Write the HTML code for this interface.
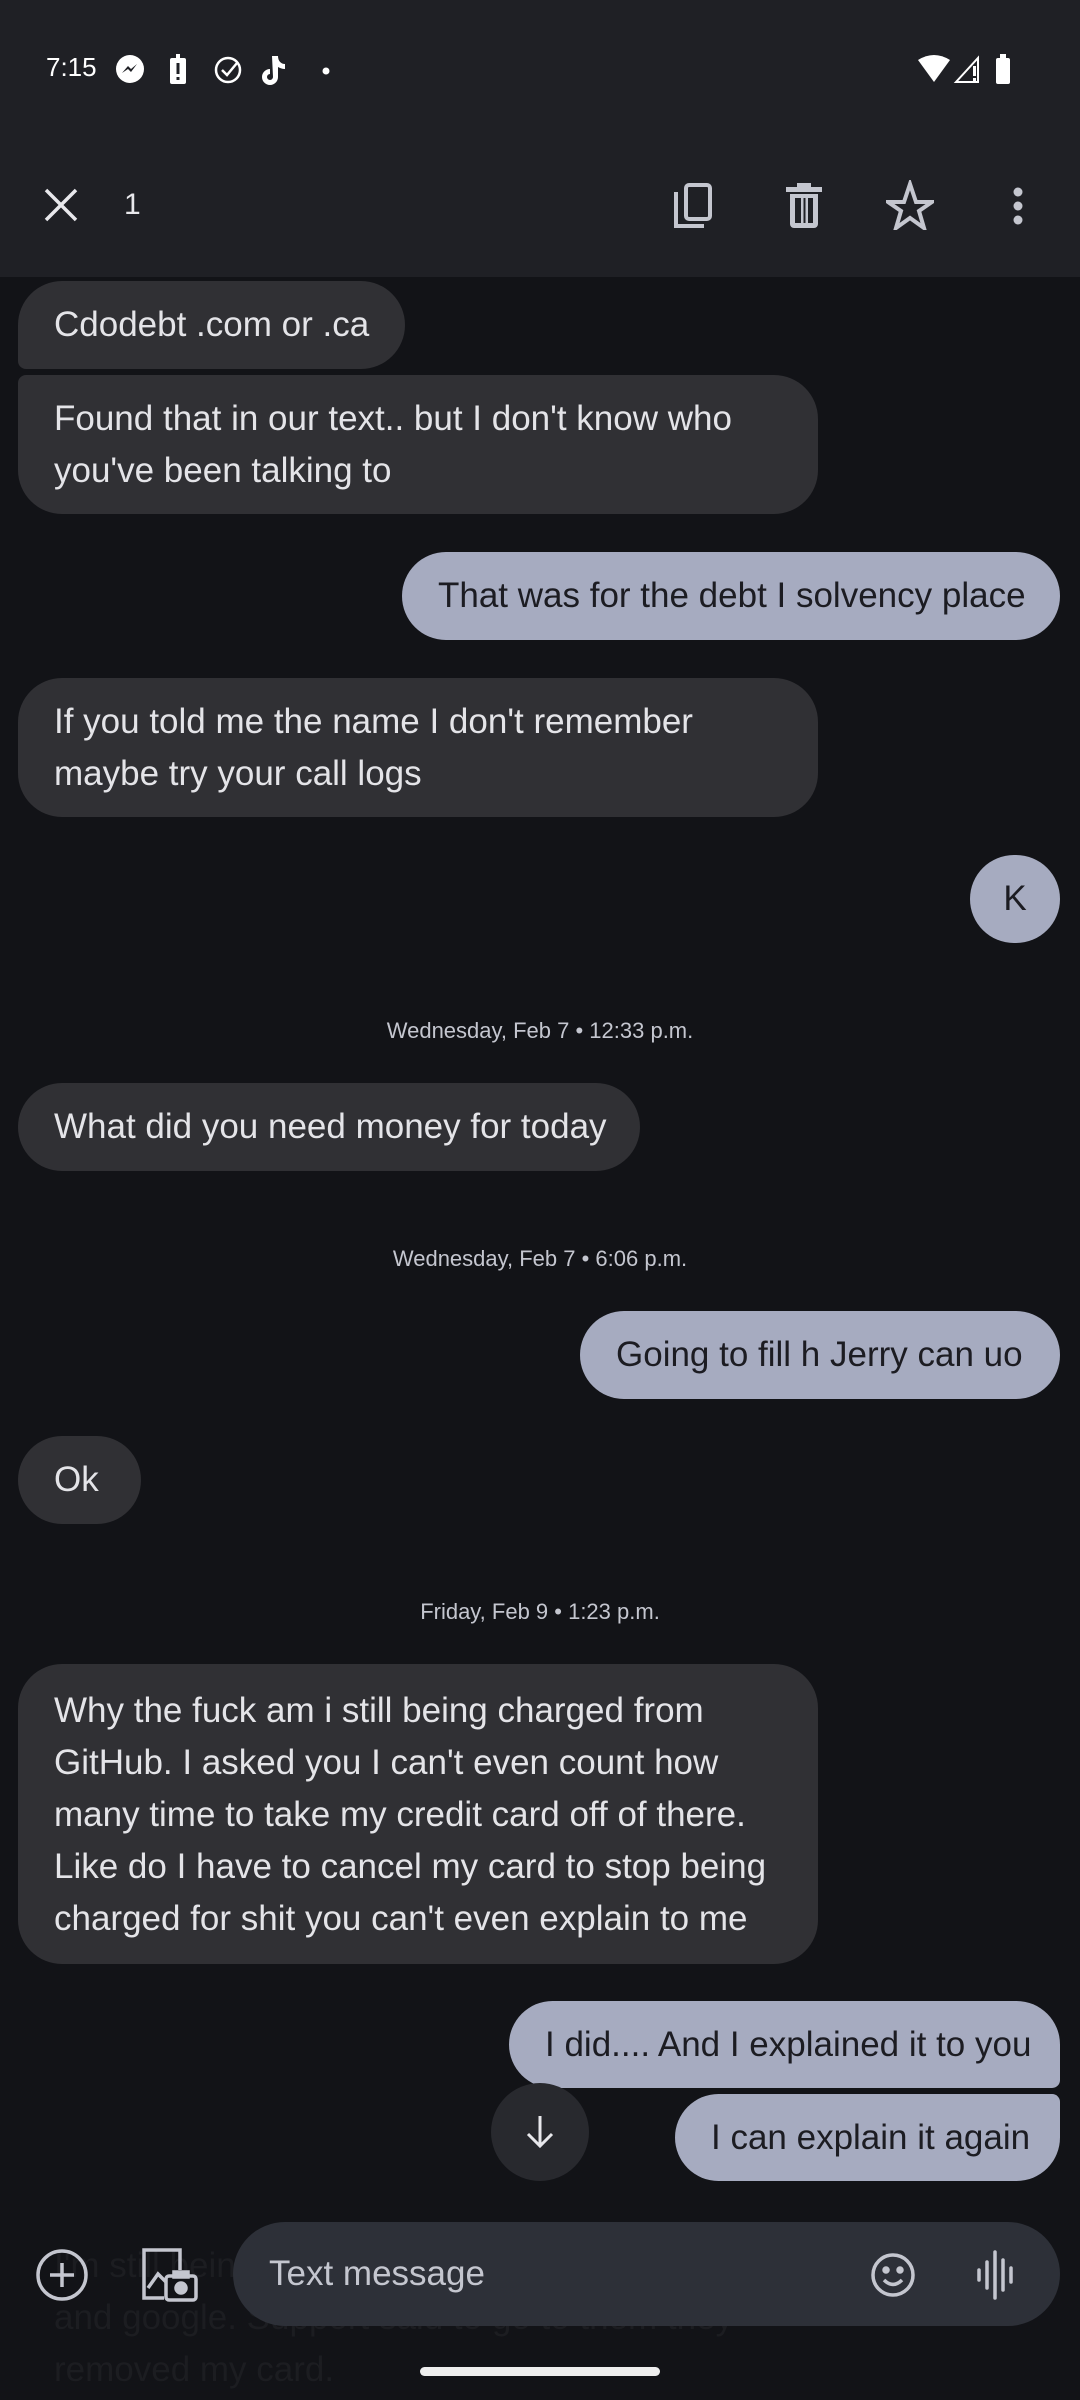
<!DOCTYPE html>
<html><head><meta charset="utf-8">
<style>
*{margin:0;padding:0;box-sizing:border-box}
body{width:1080px;height:2400px;background:#121317;position:relative;overflow:hidden;font-family:"Liberation Sans",sans-serif}
.top{position:absolute;left:0;top:0;width:1080px;height:277px;background:#1f2025}
.b{position:absolute;white-space:nowrap;font-size:35px;line-height:52px;letter-spacing:0;padding:0 36px;display:flex;align-items:center}
.r{background:#303034;color:#e4e4e8;left:18px}
.s{background:#a6abc0;color:#1c1c22;right:20px}
.ts{position:absolute;left:0;width:1080px;text-align:center;color:#c4c6cf;font-size:22px}
svg{position:absolute}
</style></head><body>
<div class="top"></div>
<div style="position:absolute;left:46px;top:52px;color:#fff;font-size:26px">7:15</div>
<svg style="left:112px;top:52px" width="220" height="36" viewBox="0 0 220 36" fill="#fff">
<circle cx="18" cy="17" r="14"/><path d="M10 21l6-7 3 3 6-5-6 8-3-3z" fill="#1f2025"/>
<rect x="58" y="6" width="16" height="26" rx="2"/><rect x="64" y="2" width="4" height="4"/><rect x="64.5" y="11" width="3" height="11" fill="#1f2025"/><rect x="64.5" y="25" width="3" height="3" fill="#1f2025"/>
<circle cx="116" cy="18" r="12" fill="none" stroke="#fff" stroke-width="2.5"/><path d="M110 18l5 5 10-12" fill="none" stroke="#fff" stroke-width="2.5"/>
<path d="M160 4h6c0 5 3 8 7 8v5c-3 0-5-1-7-2v10a8 8 0 1 1-8-8v5a3 3 0 1 0 3 3z"/>
<circle cx="214" cy="19" r="3.5"/>
</svg>
<svg style="left:916px;top:52px" width="100" height="36" viewBox="0 0 100 36" fill="#fff">
<path d="M2 8q16-10 32 0l-16 22z"/>
<path d="M40 30l22-24v24z" fill="none" stroke="#fff" stroke-width="2"/><rect x="57" y="14" width="3" height="10" fill="#fff"/><rect x="57" y="26" width="3" height="3"/>
<rect x="80" y="6" width="14" height="26" rx="2"/><rect x="84" y="2" width="6" height="4"/>
</svg>
<svg style="left:40px;top:184px" width="42" height="42" viewBox="0 0 42 42"><path d="M6 6l30 30M36 6L6 36" stroke="#e8e8ec" stroke-width="3.5"/></svg>
<div style="position:absolute;left:124px;top:188px;color:#e8e8ec;font-size:30px">1</div>
<svg style="left:672px;top:182px" width="44" height="48" viewBox="0 0 44 48" fill="none" stroke="#c4c6cf" stroke-width="4"><rect x="14" y="3" width="24" height="34" rx="3"/><path d="M4 10v34h28"/></svg>
<svg style="left:784px;top:182px" width="40" height="48" viewBox="0 0 40 48" fill="#c4c6cf"><rect x="2" y="5" width="36" height="5"/><rect x="13" y="1" width="14" height="5"/><path d="M6 12h28v30a4 4 0 0 1-4 4H10a4 4 0 0 1-4-4z"/><rect x="11" y="16" width="18" height="25" fill="#1f2025"/><rect x="17" y="16" width="2.5" height="25"/><rect x="21.5" y="16" width="2.5" height="25"/></svg>
<svg style="left:886px;top:180px" width="48" height="50" viewBox="0 0 48 50"><path d="M24 4l6 18h16l-13 9 5 17-14-10-14 10 5-17-13-9h16z" fill="none" stroke="#c4c6cf" stroke-width="4" stroke-linejoin="miter"/></svg>
<svg style="left:1006px;top:186px" width="24" height="44" viewBox="0 0 24 44" fill="#c4c6cf"><circle cx="12" cy="6" r="4.5"/><circle cx="12" cy="20" r="4.5"/><circle cx="12" cy="34" r="4.5"/></svg>

<div class="b r" style="top:281px;height:88px;width:387px;border-radius:44px 44px 44px 8px">Cdodebt .com or .ca</div>
<div class="b r" style="top:375px;height:139px;width:800px;border-radius:8px 44px 44px 44px">Found that in our text.. but I don't know who<br>you've been talking to</div>
<div class="b s" style="top:552px;height:88px;width:658px;border-radius:44px">That was for the debt I solvency place</div>
<div class="b r" style="top:678px;height:139px;width:800px;border-radius:44px">If you told me the name I don't remember<br>maybe try your call logs</div>
<div class="b s" style="top:855px;height:88px;width:90px;border-radius:44px;justify-content:center;padding:0">K</div>
<div class="ts" style="top:1018px">Wednesday, Feb 7 • 12:33 p.m.</div>
<div class="b r" style="top:1083px;height:88px;width:622px;border-radius:44px">What did you need money for today</div>
<div class="ts" style="top:1246px">Wednesday, Feb 7 • 6:06 p.m.</div>
<div class="b s" style="top:1311px;height:88px;width:480px;border-radius:44px">Going to fill h Jerry can uo</div>
<div class="b r" style="top:1436px;height:88px;width:123px;border-radius:44px">Ok</div>
<div class="ts" style="top:1599px">Friday, Feb 9 • 1:23 p.m.</div>
<div class="b r" style="top:1664px;height:300px;width:800px;border-radius:44px;padding-top:2px">Why the fuck am i still being charged from<br>GitHub. I asked you I can't even count how<br>many time to take my credit card off of there.<br>Like do I have to cancel my card to stop being<br>charged for shit you can't even explain to me</div>
<div class="b s" style="top:2001px;height:87px;width:551px;border-radius:44px 44px 8px 44px">I did.... And I explained it to you</div>
<div class="b s" style="top:2094px;height:87px;width:385px;border-radius:44px 8px 44px 44px">I can explain it again</div>
<div style="position:absolute;left:491px;top:2083px;width:98px;height:98px;border-radius:49px;background:#28292e"></div>
<svg style="left:524px;top:2114px" width="32" height="36" viewBox="0 0 32 36"><path d="M16 2v30M4 20l12 12 12-12" fill="none" stroke="#e8e8ec" stroke-width="3"/></svg>

<div style="position:absolute;left:54px;top:2240px;color:#1c1d21;font-size:35px;line-height:52px">I'm still being charged from GitHub<br>and google. Support said to go to them they<br>removed my card.</div>
<svg style="left:34px;top:2247px" width="56" height="56" viewBox="0 0 56 56" fill="none" stroke="#c4c6cf" stroke-width="3.5"><circle cx="28" cy="28" r="24"/><path d="M28 16v24M16 28h24"/></svg>
<svg style="left:140px;top:2246px" width="60" height="60" viewBox="0 0 60 60" fill="none" stroke="#c4c6cf" stroke-width="3.5"><path d="M24 52H4V4h36v20"/><path d="M8 42l10-14 8 8"/><rect x="26" y="30" width="30" height="24" rx="3"/><rect x="34" y="26" width="14" height="5" fill="#c4c6cf"/><circle cx="41" cy="42" r="5" fill="#c4c6cf"/></svg>
<div style="position:absolute;left:233px;top:2222px;width:827px;height:104px;border-radius:52px;background:#2d3038"></div>
<div style="position:absolute;left:269px;top:2254px;color:#c4c6cf;font-size:35px">Text message</div>
<svg style="left:869px;top:2251px" width="48" height="48" viewBox="0 0 48 48" fill="none" stroke="#c4c6cf" stroke-width="3.5"><circle cx="24" cy="24" r="20"/><circle cx="17" cy="19" r="2" fill="#c4c6cf"/><circle cx="31" cy="19" r="2" fill="#c4c6cf"/><path d="M15 29q9 9 18 0"/></svg>
<svg style="left:976px;top:2250px" width="42" height="50" viewBox="0 0 42 50" stroke="#c4c6cf" stroke-width="3.5" stroke-linecap="round"><path d="M3 20v10M11 12v26M19 2v46M27 10v30M35 18v14"/></svg>
<div style="position:absolute;left:420px;top:2367px;width:240px;height:9px;border-radius:5px;background:#eeeeee"></div>
</body></html>
